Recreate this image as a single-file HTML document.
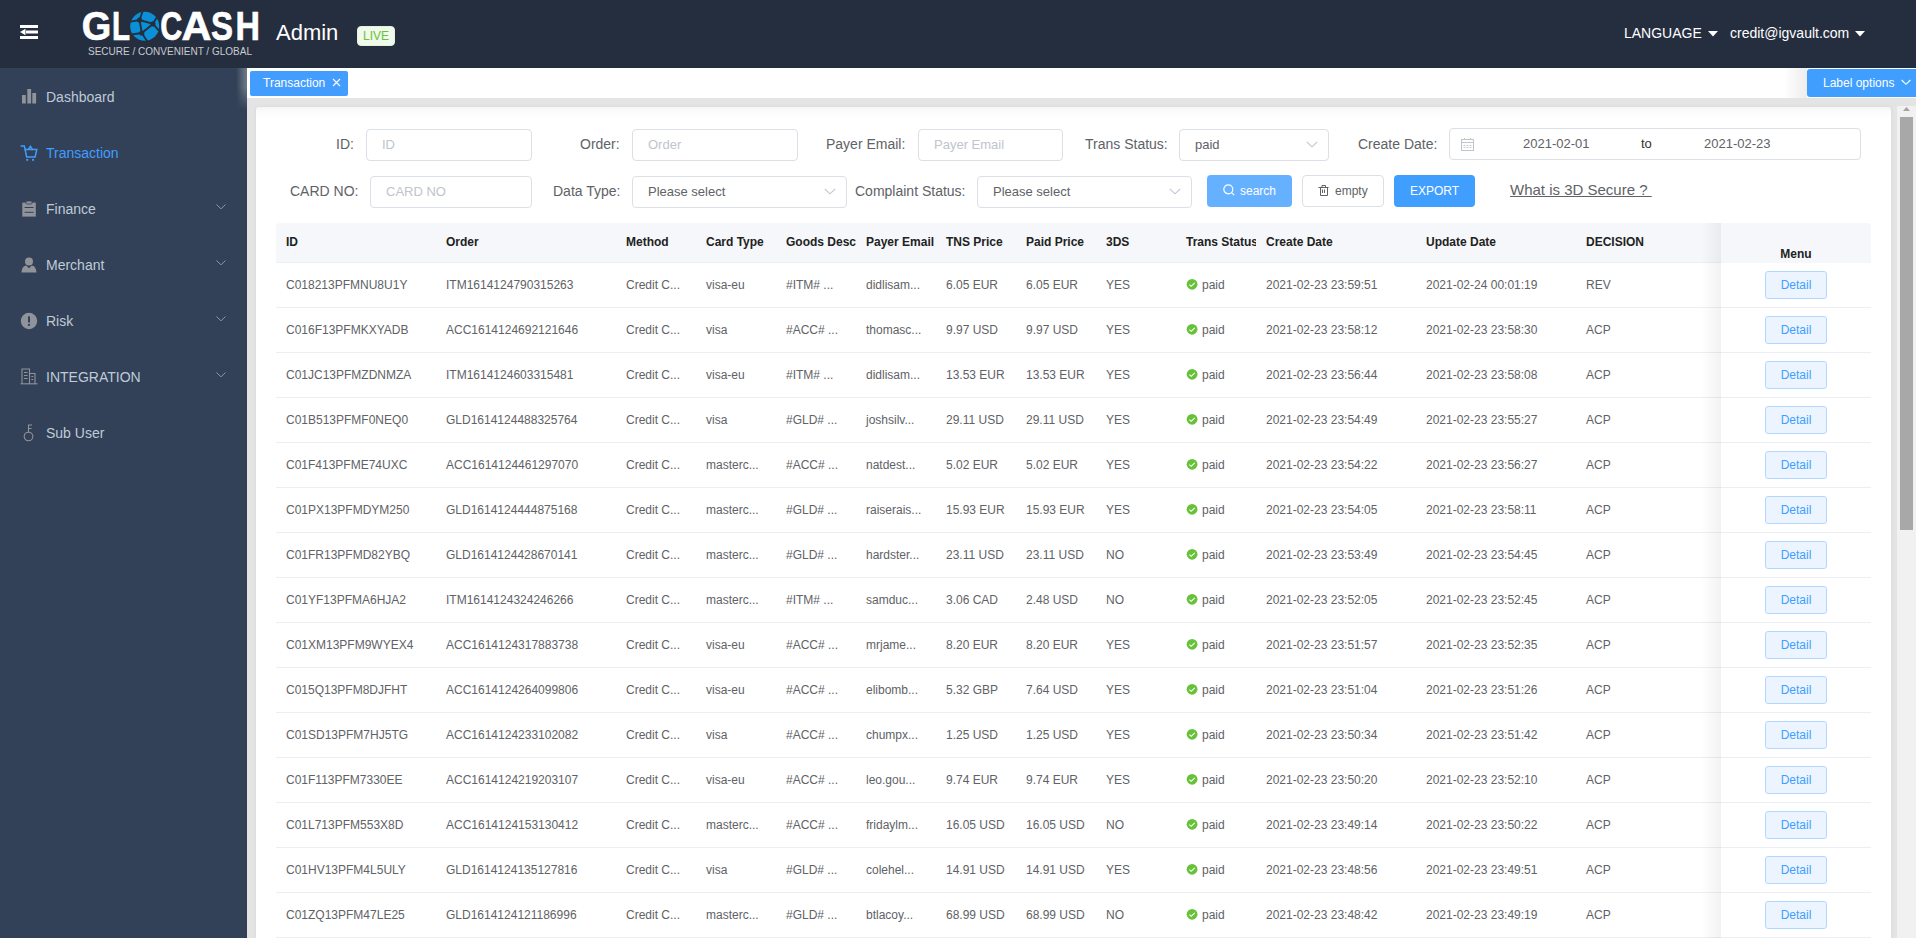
<!DOCTYPE html>
<html><head><meta charset="utf-8">
<style>
*{box-sizing:border-box;margin:0;padding:0}
html,body{width:1916px;height:938px;overflow:hidden;background:#fff;font-family:"Liberation Sans",sans-serif;}
.abs{position:absolute}
#hdr{position:absolute;left:0;top:0;width:1916px;height:68px;background:#252e3f}
#side{position:absolute;left:0;top:68px;width:247px;height:870px;background:#324157}
.mi{position:absolute;left:0;width:247px;height:56px;color:#bfcbd9;font-size:14px}
.mi .t{position:absolute;left:46px;top:20px;line-height:16px}
.mi svg{position:absolute}
.mi .chev{position:absolute;left:215px;top:22px}
#tabs{position:absolute;left:247px;top:68px;width:1669px;height:30px;background:#fff;box-shadow:0 1px 3px rgba(0,0,0,.12)}
#gray{position:absolute;left:247px;top:98px;width:1669px;height:840px;background:#e4e4e4}
#card{position:absolute;left:256px;top:107px;width:1635px;height:831px;background:linear-gradient(to bottom,#f5f5f6 0px,#fdfdfd 6px,#fff 12px);border-radius:3px 3px 0 0;box-shadow:0 0 3px rgba(150,160,190,.22)}
.lbl{position:absolute;font-size:14px;color:#606266;line-height:16px;white-space:nowrap}
.inp{position:absolute;height:32px;border:1px solid #dcdfe6;border-radius:4px;background:#fff;font-size:13px;color:#c0c4cc;line-height:30px;padding-left:15px;white-space:nowrap}
.inp.v{color:#606266}
.inp .arr{position:absolute;right:10px;top:11px}
#tbl{position:absolute;left:276px;top:223px;width:1595px;height:715px;overflow:hidden}
.thead{position:absolute;left:0;top:0;width:1595px;height:40px;background:#f5f7fa;border-bottom:1px solid #ebeef5;border-radius:4px 4px 0 0}
.th{position:absolute;top:0;height:39px;font-size:12px;font-weight:bold;color:#222;line-height:38px;padding-left:10px;overflow:hidden;white-space:nowrap}
.tr{position:absolute;left:0;width:1595px;height:45px;border-bottom:1px solid #ebeef5}
.td{position:absolute;top:0;height:44px;font-size:12px;color:#606266;line-height:44px;padding-left:10px;white-space:nowrap;overflow:hidden}
.ck{position:absolute;left:10px;top:15px}
.pd{position:absolute;left:26px;top:0}
.fx{position:absolute;left:1445px;top:0;width:150px;height:44px;background:#fff}
.btn-d{position:absolute;left:44px;top:8px;width:62px;height:28px;border:1px solid #b3d8ff;background:#ecf5ff;color:#409eff;border-radius:3px;font-size:12px;line-height:26px;text-align:center}
#fxshadow{position:absolute;left:1700px;top:223px;width:20px;height:715px;background:linear-gradient(to right,rgba(0,0,0,0),rgba(0,0,0,.06))}
</style></head><body>
<div id="hdr">
  <svg class="abs" style="left:20px;top:24px" width="19" height="16" viewBox="0 0 19 16">
    <rect x="0" y="1" width="18" height="3" fill="#fff"/>
    <rect x="6" y="6.5" width="12" height="3" fill="#fff"/>
    <path d="M0 8 L5.5 4.8 L5.5 11.2 Z" fill="#fff"/>
    <rect x="0" y="12" width="18" height="3" fill="#fff"/>
  </svg>
  <svg class="abs" style="left:0;top:0" width="270" height="68" viewBox="0 0 270 68">
    <g fill="#fff" stroke="#fff" stroke-width="0.7" font-family="Liberation Sans" font-weight="bold" font-size="40">
      <text x="81.8" y="40" textLength="29.5" lengthAdjust="spacingAndGlyphs">G</text>
      <text x="112" y="40" textLength="18" lengthAdjust="spacingAndGlyphs">L</text>
      <text x="160.2" y="40" textLength="22" lengthAdjust="spacingAndGlyphs">C</text>
      <text x="181.5" y="40" textLength="30" lengthAdjust="spacingAndGlyphs">A</text>
      <text x="211" y="40" textLength="22" lengthAdjust="spacingAndGlyphs">S</text>
      <text x="235.5" y="40" textLength="24.5" lengthAdjust="spacingAndGlyphs">H</text>
    </g>
    <g transform="translate(128,8)">
      <circle cx="16.7" cy="18.2" r="14.5" fill="#0b90d8"/>
      <g stroke="#252e3f" stroke-width="1.9" fill="none" stroke-linecap="round">
        <path d="M11.6 12 L14.5 3.5 M11.6 12 L2.5 13.6 M11.6 12 L25 15.9 M11.6 12 L13.8 25 M25 15.9 L28.2 10.3 M25 15.9 L30.2 21.8 M25 15.9 L13.8 25 M13.8 25 L5 26.3 M13.8 25 L19 33"/>
      </g>
      <g fill="#252e3f"><circle cx="11.6" cy="12" r="2.6"/><circle cx="25" cy="15.9" r="2.6"/><circle cx="13.8" cy="25" r="2.6"/></g>
    </g>
    <text x="88" y="55" fill="#c8cbd0" font-family="Liberation Sans" font-size="11" textLength="164" lengthAdjust="spacingAndGlyphs">SECURE / CONVENIENT / GLOBAL</text>
  </svg>
  <div class="abs" style="left:276px;top:20px;color:#fff;font-size:22px;line-height:26px">Admin</div>
  <div class="abs" style="left:357px;top:26px;width:38px;height:20px;background:#f0f9eb;border:1px solid #e1f3d8;border-radius:4px;color:#67c23a;font-size:12px;line-height:18px;text-align:center">LIVE</div>
  <div class="abs" style="left:1624px;top:25px;color:#fff;font-size:14px;line-height:16px">LANGUAGE</div>
  <div class="abs" style="left:1730px;top:25px;color:#fff;font-size:14px;line-height:16px">credit@igvault.com</div>
  <svg class="abs" style="left:1708px;top:31px" width="10" height="6"><path d="M0 0 L10 0 L5 5.5 Z" fill="#fff"/></svg>
  <svg class="abs" style="left:1855px;top:31px" width="10" height="6"><path d="M0 0 L10 0 L5 5.5 Z" fill="#fff"/></svg>
</div>
<div id="side">
  <div class="mi" style="top:1px">
    <svg style="left:22px;top:20px" width="15" height="15" viewBox="0 0 15 15" fill="#909399"><rect x="0" y="6" width="3.8" height="8.5"/><rect x="5.3" y="0" width="3.8" height="14.5"/><rect x="10.3" y="4" width="3.8" height="10.5"/></svg>
    <div class="t">Dashboard</div></div>
  <div class="mi" style="top:57px;color:#409eff">
    <svg style="left:20px;top:20px" width="19" height="17" viewBox="0 0 19 17" fill="none" stroke="#409eff" stroke-width="1.5" stroke-linejoin="miter"><path d="M0.6 0.9 L4.3 0.9 L6.7 12 L15.1 12 L16.8 4.6 L5.4 4.6"/><path d="M8.3 4.6 L10.4 1.4 L12.6 4.6"/><rect x="6.3" y="13.9" width="1.9" height="1.9" fill="#409eff" stroke="none"/><rect x="12.1" y="13.9" width="1.9" height="1.9" fill="#409eff" stroke="none"/></svg>
    <div class="t">Transaction</div></div>
  <div class="mi" style="top:113px">
    <svg style="left:22px;top:20px" width="15" height="16" viewBox="0 0 15 16"><rect x="0.3" y="1.6" width="13.5" height="14" fill="#909399"/><rect x="4" y="0" width="6" height="3" rx="1" fill="#909399" stroke="#324157" stroke-width="0.8"/><rect x="2.6" y="6" width="9" height="1" fill="#324157"/><rect x="2.6" y="10.8" width="9" height="1" fill="#324157"/></svg>
    <div class="t">Finance</div><svg class="chev" width="12" height="8" viewBox="0 0 12 8"><path d="M1.4 1.5 L6 5.8 L10.6 1.5" stroke="#909399" stroke-width="1" fill="none"/></svg></div>
  <div class="mi" style="top:169px">
    <svg style="left:21px;top:20px" width="16" height="16" viewBox="0 0 16 16" fill="#909399"><circle cx="8" cy="4.5" r="4"/><path d="M0.5 15.5 C0.8 10.5 3 8.8 5.2 8.4 L8 11.2 L10.8 8.4 C13 8.8 15.2 10.5 15.5 15.5 Z"/></svg>
    <div class="t">Merchant</div><svg class="chev" width="12" height="8" viewBox="0 0 12 8"><path d="M1.4 1.5 L6 5.8 L10.6 1.5" stroke="#909399" stroke-width="1" fill="none"/></svg></div>
  <div class="mi" style="top:225px">
    <svg style="left:20px;top:19px" width="18" height="18" viewBox="0 0 18 18"><circle cx="9" cy="9" r="8.2" fill="#909399"/><rect x="8" y="4.2" width="2" height="6.3" rx="0.6" fill="#324157"/><circle cx="9" cy="12.9" r="1.1" fill="#324157"/></svg>
    <div class="t">Risk</div><svg class="chev" width="12" height="8" viewBox="0 0 12 8"><path d="M1.4 1.5 L6 5.8 L10.6 1.5" stroke="#909399" stroke-width="1" fill="none"/></svg></div>
  <div class="mi" style="top:281px">
    <svg style="left:20px;top:19px" width="18" height="17" viewBox="0 0 18 17" fill="none" stroke="#909399" stroke-width="1.1"><path d="M0.5 15.8 L17.5 15.8"/><path d="M2 15.8 L2 1 L9.5 1 L9.5 15.8"/><path d="M9.5 5.5 L15 5.5 L15 15.8"/><path d="M4 4.5 L7.6 4.5 M4 7.5 L7.6 7.5 M4 10.5 L7.6 10.5 M11.3 8.5 L13.3 8.5 M11.3 11.5 L13.3 11.5"/></svg>
    <div class="t">INTEGRATION</div><svg class="chev" width="12" height="8" viewBox="0 0 12 8"><path d="M1.4 1.5 L6 5.8 L10.6 1.5" stroke="#909399" stroke-width="1" fill="none"/></svg></div>
  <div class="mi" style="top:337px">
    <svg style="left:23px;top:19px" width="12" height="18" viewBox="0 0 12 18" fill="none" stroke="#909399" stroke-width="1.1"><circle cx="5.5" cy="12.5" r="4.3"/><path d="M5.5 8.2 L5.5 1 L9 1 M5.5 4.5 L8.5 4.5"/></svg>
    <div class="t">Sub User</div></div>
</div>
<div class="abs" style="left:236px;top:68px;width:11px;height:42px;background:linear-gradient(to right,rgba(255,255,255,0),rgba(255,255,255,.32));-webkit-mask-image:linear-gradient(to bottom,#000 0%,#000 45%,transparent 100%)"></div>
<div id="tabs">
  <div class="abs" style="left:3px;top:3px;width:98px;height:25px;background:#429dff;border-radius:2px;color:#fff;font-size:12px;line-height:25px;padding-left:13px">Transaction</div>
  <svg class="abs" style="left:85px;top:10px" width="9" height="9" viewBox="0 0 9 9"><path d="M1 1 L8 8 M8 1 L1 8" stroke="#fff" stroke-width="1.1"/></svg>
  <div class="abs" style="left:1560px;top:1px;width:109px;height:28px;background:#409eff;border-radius:3px 0 0 3px;color:#fff;font-size:12px;line-height:28px;padding-left:16px">Label options</div>
  <div class="abs" style="left:1537px;top:0;width:23px;height:30px;background:linear-gradient(to right,rgba(0,0,0,0),rgba(0,0,0,.07))"></div>
  <svg class="abs" style="left:1654px;top:11px" width="10" height="7" viewBox="0 0 10 7"><path d="M0.6 1 L5 5.3 L9.4 1" stroke="#fff" stroke-width="1.1" fill="none"/></svg>
</div>
<div id="gray"></div>
<div class="abs" style="left:1897px;top:106px;width:19px;height:832px;background:#f1f1f1"></div>
<svg class="abs" style="left:1901px;top:105px" width="11" height="7"><path d="M2 6 L5.5 2 L9 6 Z" fill="#a3a3a3"/></svg>
<div class="abs" style="left:1900px;top:117px;width:13px;height:413px;background:#a8a8a8"></div>
<div id="card"></div>
<div class="lbl" style="left:336px;top:136px">ID:</div>
<div class="inp" style="left:366px;top:129px;width:166px">ID</div>
<div class="lbl" style="left:580px;top:136px">Order:</div>
<div class="inp" style="left:632px;top:129px;width:166px">Order</div>
<div class="lbl" style="left:826px;top:136px">Payer Email:</div>
<div class="inp" style="left:918px;top:129px;width:145px">Payer Email</div>
<div class="lbl" style="left:1085px;top:136px">Trans Status:</div>
<div class="inp v" style="left:1179px;top:129px;width:150px">paid<svg class="arr" width="12" height="7" viewBox="0 0 12 7"><path d="M0.8 0.8 L6 5.8 L11.2 0.8" stroke="#c0c4cc" stroke-width="1.1" fill="none"/></svg></div>
<div class="lbl" style="left:1358px;top:136px">Create Date:</div>
<div class="inp v" style="left:1449px;top:128px;width:412px;padding-left:0"><svg class="abs" style="left:11px;top:9px" width="13" height="13" viewBox="0 0 13 13" fill="none" stroke="#c0c4cc" stroke-width="1"><rect x="0.5" y="1.5" width="12" height="11"/><path d="M0.5 4.5 H12.5 M3.5 0 V2 M9.5 0 V2"/><path d="M2.5 7.5 H4.5 M5.5 7.5 H7.5 M8.5 7.5 H10.5 M2.5 9.5 H4.5 M5.5 9.5 H7.5 M8.5 9.5 H10.5" stroke-width="0.9"/></svg><span class="abs" style="left:73px;top:0">2021-02-01</span><span class="abs" style="left:191px;top:0;color:#303133;font-size:13px">to</span><span class="abs" style="left:254px;top:0">2021-02-23</span></div>
<div class="lbl" style="left:290px;top:183px">CARD NO:</div>
<div class="inp" style="left:370px;top:176px;width:162px">CARD NO</div>
<div class="lbl" style="left:553px;top:183px">Data Type:</div>
<div class="inp v" style="left:632px;top:176px;width:215px">Please select<svg class="arr" width="12" height="7" viewBox="0 0 12 7"><path d="M0.8 0.8 L6 5.8 L11.2 0.8" stroke="#c0c4cc" stroke-width="1.1" fill="none"/></svg></div>
<div class="lbl" style="left:855px;top:183px">Complaint Status:</div>
<div class="inp v" style="left:977px;top:176px;width:215px">Please select<svg class="arr" width="12" height="7" viewBox="0 0 12 7"><path d="M0.8 0.8 L6 5.8 L11.2 0.8" stroke="#c0c4cc" stroke-width="1.1" fill="none"/></svg></div>
<div class="abs" style="left:1207px;top:175px;width:85px;height:32px;background:#66b1ff;border-radius:4px;color:#fff;font-size:12px;line-height:32px;padding-left:33px">search</div>
<svg class="abs" style="left:1223px;top:184px" width="12" height="12" viewBox="0 0 12 12" fill="none" stroke="#fff" stroke-width="1.2"><circle cx="5.3" cy="5.3" r="4.5"/><path d="M8.6 8.6 L11.2 11.2"/></svg>
<div class="abs" style="left:1302px;top:175px;width:82px;height:32px;background:#fff;border:1px solid #dcdfe6;border-radius:4px;color:#606266;font-size:12px;line-height:30px;padding-left:32px">empty</div>
<svg class="abs" style="left:1318px;top:184px" width="11" height="13" viewBox="0 0 11 13" fill="none" stroke="#606266" stroke-width="1"><path d="M0.5 3.5 H10.5 M4 3.5 V1.5 H7.5 V3.5 M2.5 3.5 V11.5 H9.5 V3.5 M4.5 5.5 V9 M6.5 5.5 V9"/></svg>
<div class="abs" style="left:1394px;top:175px;width:81px;height:32px;background:#409eff;border-radius:4px;color:#fff;font-size:12px;line-height:32px;text-align:center">EXPORT</div>
<div class="abs" style="left:1510px;top:181px;color:#606266;font-size:15px;line-height:18px;text-decoration:underline;white-space:pre">What is 3D Secure ? </div>
<div id="tbl">
  <div class="thead"><div class="th" style="left:0px;width:160px"><span>ID</span></div><div class="th" style="left:160px;width:180px"><span>Order</span></div><div class="th" style="left:340px;width:80px"><span>Method</span></div><div class="th" style="left:420px;width:80px"><span>Card Type</span></div><div class="th" style="left:500px;width:80px"><span>Goods Desc</span></div><div class="th" style="left:580px;width:80px"><span>Payer Email</span></div><div class="th" style="left:660px;width:80px"><span>TNS Price</span></div><div class="th" style="left:740px;width:80px"><span>Paid Price</span></div><div class="th" style="left:820px;width:80px"><span>3DS</span></div><div class="th" style="left:900px;width:80px"><span>Trans Status</span></div><div class="th" style="left:980px;width:160px"><span>Create Date</span></div><div class="th" style="left:1140px;width:160px"><span>Update Date</span></div><div class="th" style="left:1300px;width:295px"><span>DECISION</span></div></div>
  <div class="tr" style="top:40px"><div class="td" style="left:0px;width:160px">C018213PFMNU8U1Y</div><div class="td" style="left:160px;width:180px">ITM1614124790315263</div><div class="td" style="left:340px;width:80px">Credit C...</div><div class="td" style="left:420px;width:80px">visa-eu</div><div class="td" style="left:500px;width:80px">#ITM# ...</div><div class="td" style="left:580px;width:80px">didlisam...</div><div class="td" style="left:660px;width:80px">6.05 EUR</div><div class="td" style="left:740px;width:80px">6.05 EUR</div><div class="td" style="left:820px;width:80px">YES</div><div class="td" style="left:900px;width:80px"><svg class="ck" width="12" height="12" viewBox="0 0 12 12"><circle cx="6.1" cy="6.3" r="5.4" fill="#67c23a"/><path d="M3.4 6.6 L5.2 8.3 L8.8 4.9" stroke="#fff" stroke-width="1.1" fill="none"/></svg><span class="pd">paid</span></div><div class="td" style="left:980px;width:160px">2021-02-23 23:59:51</div><div class="td" style="left:1140px;width:160px">2021-02-24 00:01:19</div><div class="td" style="left:1300px;width:295px">REV</div><div class="fx"><div class="btn-d">Detail</div></div></div>
<div class="tr" style="top:85px"><div class="td" style="left:0px;width:160px">C016F13PFMKXYADB</div><div class="td" style="left:160px;width:180px">ACC1614124692121646</div><div class="td" style="left:340px;width:80px">Credit C...</div><div class="td" style="left:420px;width:80px">visa</div><div class="td" style="left:500px;width:80px">#ACC# ...</div><div class="td" style="left:580px;width:80px">thomasc...</div><div class="td" style="left:660px;width:80px">9.97 USD</div><div class="td" style="left:740px;width:80px">9.97 USD</div><div class="td" style="left:820px;width:80px">YES</div><div class="td" style="left:900px;width:80px"><svg class="ck" width="12" height="12" viewBox="0 0 12 12"><circle cx="6.1" cy="6.3" r="5.4" fill="#67c23a"/><path d="M3.4 6.6 L5.2 8.3 L8.8 4.9" stroke="#fff" stroke-width="1.1" fill="none"/></svg><span class="pd">paid</span></div><div class="td" style="left:980px;width:160px">2021-02-23 23:58:12</div><div class="td" style="left:1140px;width:160px">2021-02-23 23:58:30</div><div class="td" style="left:1300px;width:295px">ACP</div><div class="fx"><div class="btn-d">Detail</div></div></div>
<div class="tr" style="top:130px"><div class="td" style="left:0px;width:160px">C01JC13PFMZDNMZA</div><div class="td" style="left:160px;width:180px">ITM1614124603315481</div><div class="td" style="left:340px;width:80px">Credit C...</div><div class="td" style="left:420px;width:80px">visa-eu</div><div class="td" style="left:500px;width:80px">#ITM# ...</div><div class="td" style="left:580px;width:80px">didlisam...</div><div class="td" style="left:660px;width:80px">13.53 EUR</div><div class="td" style="left:740px;width:80px">13.53 EUR</div><div class="td" style="left:820px;width:80px">YES</div><div class="td" style="left:900px;width:80px"><svg class="ck" width="12" height="12" viewBox="0 0 12 12"><circle cx="6.1" cy="6.3" r="5.4" fill="#67c23a"/><path d="M3.4 6.6 L5.2 8.3 L8.8 4.9" stroke="#fff" stroke-width="1.1" fill="none"/></svg><span class="pd">paid</span></div><div class="td" style="left:980px;width:160px">2021-02-23 23:56:44</div><div class="td" style="left:1140px;width:160px">2021-02-23 23:58:08</div><div class="td" style="left:1300px;width:295px">ACP</div><div class="fx"><div class="btn-d">Detail</div></div></div>
<div class="tr" style="top:175px"><div class="td" style="left:0px;width:160px">C01B513PFMF0NEQ0</div><div class="td" style="left:160px;width:180px">GLD1614124488325764</div><div class="td" style="left:340px;width:80px">Credit C...</div><div class="td" style="left:420px;width:80px">visa</div><div class="td" style="left:500px;width:80px">#GLD# ...</div><div class="td" style="left:580px;width:80px">joshsilv...</div><div class="td" style="left:660px;width:80px">29.11 USD</div><div class="td" style="left:740px;width:80px">29.11 USD</div><div class="td" style="left:820px;width:80px">YES</div><div class="td" style="left:900px;width:80px"><svg class="ck" width="12" height="12" viewBox="0 0 12 12"><circle cx="6.1" cy="6.3" r="5.4" fill="#67c23a"/><path d="M3.4 6.6 L5.2 8.3 L8.8 4.9" stroke="#fff" stroke-width="1.1" fill="none"/></svg><span class="pd">paid</span></div><div class="td" style="left:980px;width:160px">2021-02-23 23:54:49</div><div class="td" style="left:1140px;width:160px">2021-02-23 23:55:27</div><div class="td" style="left:1300px;width:295px">ACP</div><div class="fx"><div class="btn-d">Detail</div></div></div>
<div class="tr" style="top:220px"><div class="td" style="left:0px;width:160px">C01F413PFME74UXC</div><div class="td" style="left:160px;width:180px">ACC1614124461297070</div><div class="td" style="left:340px;width:80px">Credit C...</div><div class="td" style="left:420px;width:80px">masterc...</div><div class="td" style="left:500px;width:80px">#ACC# ...</div><div class="td" style="left:580px;width:80px">natdest...</div><div class="td" style="left:660px;width:80px">5.02 EUR</div><div class="td" style="left:740px;width:80px">5.02 EUR</div><div class="td" style="left:820px;width:80px">YES</div><div class="td" style="left:900px;width:80px"><svg class="ck" width="12" height="12" viewBox="0 0 12 12"><circle cx="6.1" cy="6.3" r="5.4" fill="#67c23a"/><path d="M3.4 6.6 L5.2 8.3 L8.8 4.9" stroke="#fff" stroke-width="1.1" fill="none"/></svg><span class="pd">paid</span></div><div class="td" style="left:980px;width:160px">2021-02-23 23:54:22</div><div class="td" style="left:1140px;width:160px">2021-02-23 23:56:27</div><div class="td" style="left:1300px;width:295px">ACP</div><div class="fx"><div class="btn-d">Detail</div></div></div>
<div class="tr" style="top:265px"><div class="td" style="left:0px;width:160px">C01PX13PFMDYM250</div><div class="td" style="left:160px;width:180px">GLD1614124444875168</div><div class="td" style="left:340px;width:80px">Credit C...</div><div class="td" style="left:420px;width:80px">masterc...</div><div class="td" style="left:500px;width:80px">#GLD# ...</div><div class="td" style="left:580px;width:80px">raiserais...</div><div class="td" style="left:660px;width:80px">15.93 EUR</div><div class="td" style="left:740px;width:80px">15.93 EUR</div><div class="td" style="left:820px;width:80px">YES</div><div class="td" style="left:900px;width:80px"><svg class="ck" width="12" height="12" viewBox="0 0 12 12"><circle cx="6.1" cy="6.3" r="5.4" fill="#67c23a"/><path d="M3.4 6.6 L5.2 8.3 L8.8 4.9" stroke="#fff" stroke-width="1.1" fill="none"/></svg><span class="pd">paid</span></div><div class="td" style="left:980px;width:160px">2021-02-23 23:54:05</div><div class="td" style="left:1140px;width:160px">2021-02-23 23:58:11</div><div class="td" style="left:1300px;width:295px">ACP</div><div class="fx"><div class="btn-d">Detail</div></div></div>
<div class="tr" style="top:310px"><div class="td" style="left:0px;width:160px">C01FR13PFMD82YBQ</div><div class="td" style="left:160px;width:180px">GLD1614124428670141</div><div class="td" style="left:340px;width:80px">Credit C...</div><div class="td" style="left:420px;width:80px">masterc...</div><div class="td" style="left:500px;width:80px">#GLD# ...</div><div class="td" style="left:580px;width:80px">hardster...</div><div class="td" style="left:660px;width:80px">23.11 USD</div><div class="td" style="left:740px;width:80px">23.11 USD</div><div class="td" style="left:820px;width:80px">NO</div><div class="td" style="left:900px;width:80px"><svg class="ck" width="12" height="12" viewBox="0 0 12 12"><circle cx="6.1" cy="6.3" r="5.4" fill="#67c23a"/><path d="M3.4 6.6 L5.2 8.3 L8.8 4.9" stroke="#fff" stroke-width="1.1" fill="none"/></svg><span class="pd">paid</span></div><div class="td" style="left:980px;width:160px">2021-02-23 23:53:49</div><div class="td" style="left:1140px;width:160px">2021-02-23 23:54:45</div><div class="td" style="left:1300px;width:295px">ACP</div><div class="fx"><div class="btn-d">Detail</div></div></div>
<div class="tr" style="top:355px"><div class="td" style="left:0px;width:160px">C01YF13PFMA6HJA2</div><div class="td" style="left:160px;width:180px">ITM1614124324246266</div><div class="td" style="left:340px;width:80px">Credit C...</div><div class="td" style="left:420px;width:80px">masterc...</div><div class="td" style="left:500px;width:80px">#ITM# ...</div><div class="td" style="left:580px;width:80px">samduc...</div><div class="td" style="left:660px;width:80px">3.06 CAD</div><div class="td" style="left:740px;width:80px">2.48 USD</div><div class="td" style="left:820px;width:80px">NO</div><div class="td" style="left:900px;width:80px"><svg class="ck" width="12" height="12" viewBox="0 0 12 12"><circle cx="6.1" cy="6.3" r="5.4" fill="#67c23a"/><path d="M3.4 6.6 L5.2 8.3 L8.8 4.9" stroke="#fff" stroke-width="1.1" fill="none"/></svg><span class="pd">paid</span></div><div class="td" style="left:980px;width:160px">2021-02-23 23:52:05</div><div class="td" style="left:1140px;width:160px">2021-02-23 23:52:45</div><div class="td" style="left:1300px;width:295px">ACP</div><div class="fx"><div class="btn-d">Detail</div></div></div>
<div class="tr" style="top:400px"><div class="td" style="left:0px;width:160px">C01XM13PFM9WYEX4</div><div class="td" style="left:160px;width:180px">ACC1614124317883738</div><div class="td" style="left:340px;width:80px">Credit C...</div><div class="td" style="left:420px;width:80px">visa-eu</div><div class="td" style="left:500px;width:80px">#ACC# ...</div><div class="td" style="left:580px;width:80px">mrjame...</div><div class="td" style="left:660px;width:80px">8.20 EUR</div><div class="td" style="left:740px;width:80px">8.20 EUR</div><div class="td" style="left:820px;width:80px">YES</div><div class="td" style="left:900px;width:80px"><svg class="ck" width="12" height="12" viewBox="0 0 12 12"><circle cx="6.1" cy="6.3" r="5.4" fill="#67c23a"/><path d="M3.4 6.6 L5.2 8.3 L8.8 4.9" stroke="#fff" stroke-width="1.1" fill="none"/></svg><span class="pd">paid</span></div><div class="td" style="left:980px;width:160px">2021-02-23 23:51:57</div><div class="td" style="left:1140px;width:160px">2021-02-23 23:52:35</div><div class="td" style="left:1300px;width:295px">ACP</div><div class="fx"><div class="btn-d">Detail</div></div></div>
<div class="tr" style="top:445px"><div class="td" style="left:0px;width:160px">C015Q13PFM8DJFHT</div><div class="td" style="left:160px;width:180px">ACC1614124264099806</div><div class="td" style="left:340px;width:80px">Credit C...</div><div class="td" style="left:420px;width:80px">visa-eu</div><div class="td" style="left:500px;width:80px">#ACC# ...</div><div class="td" style="left:580px;width:80px">elibomb...</div><div class="td" style="left:660px;width:80px">5.32 GBP</div><div class="td" style="left:740px;width:80px">7.64 USD</div><div class="td" style="left:820px;width:80px">YES</div><div class="td" style="left:900px;width:80px"><svg class="ck" width="12" height="12" viewBox="0 0 12 12"><circle cx="6.1" cy="6.3" r="5.4" fill="#67c23a"/><path d="M3.4 6.6 L5.2 8.3 L8.8 4.9" stroke="#fff" stroke-width="1.1" fill="none"/></svg><span class="pd">paid</span></div><div class="td" style="left:980px;width:160px">2021-02-23 23:51:04</div><div class="td" style="left:1140px;width:160px">2021-02-23 23:51:26</div><div class="td" style="left:1300px;width:295px">ACP</div><div class="fx"><div class="btn-d">Detail</div></div></div>
<div class="tr" style="top:490px"><div class="td" style="left:0px;width:160px">C01SD13PFM7HJ5TG</div><div class="td" style="left:160px;width:180px">ACC1614124233102082</div><div class="td" style="left:340px;width:80px">Credit C...</div><div class="td" style="left:420px;width:80px">visa</div><div class="td" style="left:500px;width:80px">#ACC# ...</div><div class="td" style="left:580px;width:80px">chumpx...</div><div class="td" style="left:660px;width:80px">1.25 USD</div><div class="td" style="left:740px;width:80px">1.25 USD</div><div class="td" style="left:820px;width:80px">YES</div><div class="td" style="left:900px;width:80px"><svg class="ck" width="12" height="12" viewBox="0 0 12 12"><circle cx="6.1" cy="6.3" r="5.4" fill="#67c23a"/><path d="M3.4 6.6 L5.2 8.3 L8.8 4.9" stroke="#fff" stroke-width="1.1" fill="none"/></svg><span class="pd">paid</span></div><div class="td" style="left:980px;width:160px">2021-02-23 23:50:34</div><div class="td" style="left:1140px;width:160px">2021-02-23 23:51:42</div><div class="td" style="left:1300px;width:295px">ACP</div><div class="fx"><div class="btn-d">Detail</div></div></div>
<div class="tr" style="top:535px"><div class="td" style="left:0px;width:160px">C01F113PFM7330EE</div><div class="td" style="left:160px;width:180px">ACC1614124219203107</div><div class="td" style="left:340px;width:80px">Credit C...</div><div class="td" style="left:420px;width:80px">visa-eu</div><div class="td" style="left:500px;width:80px">#ACC# ...</div><div class="td" style="left:580px;width:80px">leo.gou...</div><div class="td" style="left:660px;width:80px">9.74 EUR</div><div class="td" style="left:740px;width:80px">9.74 EUR</div><div class="td" style="left:820px;width:80px">YES</div><div class="td" style="left:900px;width:80px"><svg class="ck" width="12" height="12" viewBox="0 0 12 12"><circle cx="6.1" cy="6.3" r="5.4" fill="#67c23a"/><path d="M3.4 6.6 L5.2 8.3 L8.8 4.9" stroke="#fff" stroke-width="1.1" fill="none"/></svg><span class="pd">paid</span></div><div class="td" style="left:980px;width:160px">2021-02-23 23:50:20</div><div class="td" style="left:1140px;width:160px">2021-02-23 23:52:10</div><div class="td" style="left:1300px;width:295px">ACP</div><div class="fx"><div class="btn-d">Detail</div></div></div>
<div class="tr" style="top:580px"><div class="td" style="left:0px;width:160px">C01L713PFM553X8D</div><div class="td" style="left:160px;width:180px">ACC1614124153130412</div><div class="td" style="left:340px;width:80px">Credit C...</div><div class="td" style="left:420px;width:80px">masterc...</div><div class="td" style="left:500px;width:80px">#ACC# ...</div><div class="td" style="left:580px;width:80px">fridaylm...</div><div class="td" style="left:660px;width:80px">16.05 USD</div><div class="td" style="left:740px;width:80px">16.05 USD</div><div class="td" style="left:820px;width:80px">NO</div><div class="td" style="left:900px;width:80px"><svg class="ck" width="12" height="12" viewBox="0 0 12 12"><circle cx="6.1" cy="6.3" r="5.4" fill="#67c23a"/><path d="M3.4 6.6 L5.2 8.3 L8.8 4.9" stroke="#fff" stroke-width="1.1" fill="none"/></svg><span class="pd">paid</span></div><div class="td" style="left:980px;width:160px">2021-02-23 23:49:14</div><div class="td" style="left:1140px;width:160px">2021-02-23 23:50:22</div><div class="td" style="left:1300px;width:295px">ACP</div><div class="fx"><div class="btn-d">Detail</div></div></div>
<div class="tr" style="top:625px"><div class="td" style="left:0px;width:160px">C01HV13PFM4L5ULY</div><div class="td" style="left:160px;width:180px">GLD1614124135127816</div><div class="td" style="left:340px;width:80px">Credit C...</div><div class="td" style="left:420px;width:80px">visa</div><div class="td" style="left:500px;width:80px">#GLD# ...</div><div class="td" style="left:580px;width:80px">colehel...</div><div class="td" style="left:660px;width:80px">14.91 USD</div><div class="td" style="left:740px;width:80px">14.91 USD</div><div class="td" style="left:820px;width:80px">YES</div><div class="td" style="left:900px;width:80px"><svg class="ck" width="12" height="12" viewBox="0 0 12 12"><circle cx="6.1" cy="6.3" r="5.4" fill="#67c23a"/><path d="M3.4 6.6 L5.2 8.3 L8.8 4.9" stroke="#fff" stroke-width="1.1" fill="none"/></svg><span class="pd">paid</span></div><div class="td" style="left:980px;width:160px">2021-02-23 23:48:56</div><div class="td" style="left:1140px;width:160px">2021-02-23 23:49:51</div><div class="td" style="left:1300px;width:295px">ACP</div><div class="fx"><div class="btn-d">Detail</div></div></div>
<div class="tr" style="top:670px"><div class="td" style="left:0px;width:160px">C01ZQ13PFM47LE25</div><div class="td" style="left:160px;width:180px">GLD1614124121186996</div><div class="td" style="left:340px;width:80px">Credit C...</div><div class="td" style="left:420px;width:80px">masterc...</div><div class="td" style="left:500px;width:80px">#GLD# ...</div><div class="td" style="left:580px;width:80px">btlacoy...</div><div class="td" style="left:660px;width:80px">68.99 USD</div><div class="td" style="left:740px;width:80px">68.99 USD</div><div class="td" style="left:820px;width:80px">NO</div><div class="td" style="left:900px;width:80px"><svg class="ck" width="12" height="12" viewBox="0 0 12 12"><circle cx="6.1" cy="6.3" r="5.4" fill="#67c23a"/><path d="M3.4 6.6 L5.2 8.3 L8.8 4.9" stroke="#fff" stroke-width="1.1" fill="none"/></svg><span class="pd">paid</span></div><div class="td" style="left:980px;width:160px">2021-02-23 23:48:42</div><div class="td" style="left:1140px;width:160px">2021-02-23 23:49:19</div><div class="td" style="left:1300px;width:295px">ACP</div><div class="fx"><div class="btn-d">Detail</div></div></div>
  <div class="abs" style="left:1425px;top:0;width:20px;height:715px;background:linear-gradient(to right,rgba(0,0,0,0),rgba(0,0,0,.05))"></div>
  <div class="abs" style="left:1445px;top:0;width:150px;height:40px;background:#f5f7fa;border-radius:0 4px 0 0;font-size:12px;font-weight:bold;color:#222;text-align:center;line-height:16px;padding-top:23px">Menu</div>
</div>
</body></html>
